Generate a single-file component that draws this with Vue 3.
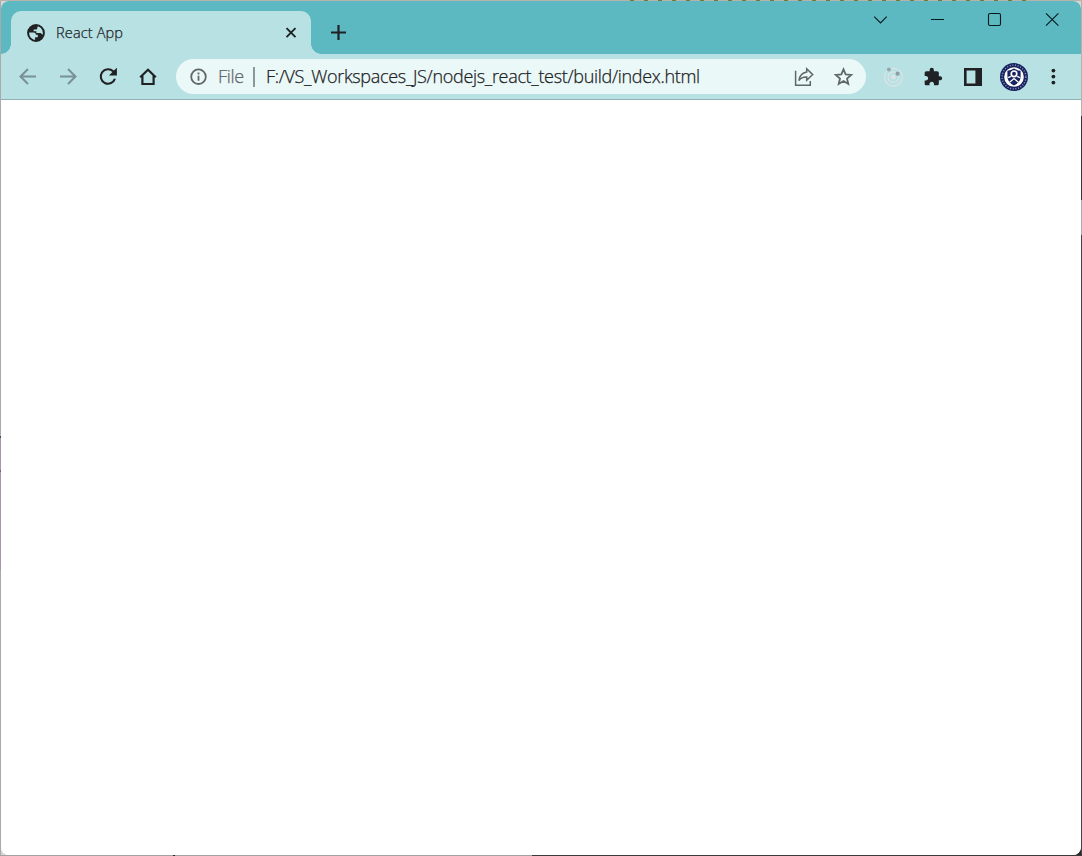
<script setup>
import { ref } from 'vue';

const tabTitle = ref('React App')
const scheme = ref('File')
const address = ref('F:/VS_Workspaces_JS/nodejs_react_test/build/index.html')
</script>

<template>
    <div class="desktop">
        <div class="window">
            <header class="title-bar">
                <div class="tab">
                    <svg class="favicon" viewBox="0 0 18 18">
                        <circle cx="9" cy="9" r="7.9" fill="#b8e1e4" stroke="#202124" stroke-width="2" />
                        <path d="M9.8 1.1C7 .5 3.5 2 2 5L1.2 8.5H6.5c1.5 0 2.3.8 2.3 2.3h2v2.4H8.1v3.5c4.2.7 7.5-1.8 8.6-5.5l-1.5-.7c-.5-1.1-1.2-1.6-2.5-1.6H9.4V7.3H6.7V5.6h2.2c1 0 1.4-.6 1.4-1.5V3l1.5-1.2z" fill="#202124" />
                    </svg>
                    <span class="tab-title">{{ tabTitle }}</span>
                    <svg class="tab-close" viewBox="0 0 12 12">
                        <path d="M1.5 1.2l9 9M10.5 1.2l-9 9" fill="none" stroke="#202124" stroke-width="1.9" />
                    </svg>
                </div>
                <svg class="new-tab" viewBox="0 0 16 16">
                    <path d="M8.5 1v15M1 8.5h15" fill="none" stroke="#202124" stroke-width="2.2" />
                </svg>
                <div class="caption-buttons">
                    <svg viewBox="0 0 16 16">
                        <path d="M1.2 4.7l6.3 6.3 6.3-6.3" />
                    </svg>
                    <svg viewBox="0 0 16 16">
                        <path d="M1 7.5h13" />
                    </svg>
                    <svg viewBox="0 0 16 16">
                        <rect x="1.5" y="1.5" width="12" height="12" rx="1.5" />
                    </svg>
                    <svg viewBox="0 0 16 16">
                        <path d="M2 1.3l12.4 12.4M14.4 1.3L2 13.7" />
                    </svg>
                </div>
            </header>

            <nav class="toolbar">
                <div class="nav-buttons">
                    <svg class="disabled" viewBox="0 0 24 24">
                        <path d="M20 11.5H5M12 4L4.5 11.5l7.5 7.5" />
                    </svg>
                    <svg class="disabled" viewBox="0 0 24 24">
                        <path d="M4 11.5h15M12 4l7.5 7.5-7.5 7.5" />
                    </svg>
                    <svg viewBox="0 0 24 24">
                        <path class="solid" d="M17.9 5.6A8.3 8.3 0 1 0 20 13.7h-2.2a6.2 6.2 0 1 1-1.4-6.6L13 10.5h7.9V2.7z" />
                    </svg>
                    <svg viewBox="0 0 24 24">
                        <path class="house" d="M4.2 12.3L12 4.8l7.8 7.5M6.4 10.8v8.2h11.2v-8.2" />
                    </svg>
                </div>

                <div class="address-bar">
                    <svg class="info" viewBox="0 0 18 18">
                        <circle cx="8.5" cy="8.7" r="7.3" />
                        <path d="M8.5 7.7v5M8.5 4.6v2" />
                    </svg>
                    <span class="scheme">{{ scheme }}</span>
                    <span class="divider"></span>
                    <span class="url">{{ address }}</span>
                    <svg class="share" viewBox="0 0 20 20">
                        <path d="M1.6 3.8v14.4h14.7v-4.3M12.7 1.8l6 5.8-6 5.7V10c-3.7-.1-6.1 1-7.8 3.6.6-4.4 3-7.7 7.8-8.5z" />
                    </svg>
                    <svg class="star" viewBox="0 0 20 20">
                        <path d="M9.5 2.3l2.15 5.1 5.55.5-4.2 3.65 1.25 5.4-4.75-2.9-4.75 2.9L6 11.55 1.8 7.9l5.55-.5z" />
                    </svg>
                </div>

                <svg class="orbit" viewBox="0 0 20 20">
                    <g fill="none" stroke="#dce3e4" stroke-width="1.2">
                        <circle cx="10.4" cy="10.2" r="8.9" />
                        <circle cx="10.4" cy="10.2" r="5.3" />
                    </g>
                    <circle cx="10.4" cy="10.2" r="2.4" fill="#dce3e4" />
                    <circle cx="5.9" cy="2.4" r="2" fill="#94a9ac" />
                    <circle cx="14.6" cy="6.7" r="2.1" fill="#8b9ea1" />
                </svg>
                <svg class="puzzle" viewBox="0 0 24 24">
                    <path d="M20.5 11H19V7c0-1.1-.9-2-2-2h-4V3.5C13 2.12 11.88 1 10.5 1S8 2.12 8 3.5V5H4c-1.1 0-1.99.9-1.99 2v3.8H3.5c1.49 0 2.7 1.21 2.7 2.7s-1.21 2.7-2.7 2.7H2V20c0 1.1.9 2 2 2h3.8v-1.5c0-1.49 1.21-2.7 2.7-2.7s2.7 1.21 2.7 2.7V22H17c1.1 0 2-.9 2-2v-4h1.5c1.38 0 2.5-1.12 2.5-2.5S21.88 11 20.5 11z" />
                </svg>
                <svg class="side-panel" viewBox="0 0 18 18">
                    <path fill-rule="evenodd" d="M0 0h18v18H0zM2.6 2.6v12.8h8.8V2.6z" />
                </svg>
                <svg class="avatar" viewBox="0 0 28 28">
                    <circle cx="14" cy="14" r="14" fill="#18235f" />
                    <circle cx="14" cy="14" r="11.9" fill="none" stroke="#8d98bd" stroke-width="1.5" stroke-dasharray="1 1.7" />
                    <circle cx="14" cy="14" r="9.8" fill="#fff" />
                    <path d="M7.4 7.7Q11 7.6 14 5.6q3 2 6.6 2.1v5.5q0 6.2-6.6 9.2-6.6-3-6.6-9.2z" fill="#18235f" />
                    <path d="M8.2 14.6l2.6-1.2M19.8 14.6l-2.6-1.2M9.6 19.2l4.4-3.6 4.4 3.6" fill="none" stroke="#fff" stroke-width="1.3" />
                    <circle cx="14" cy="10.8" r="2.8" fill="#18235f" stroke="#fff" stroke-width="1.7" />
                </svg>
                <svg class="menu" viewBox="0 0 4 16">
                    <circle cx="2.4" cy="1.6" r="1.9" />
                    <circle cx="2.4" cy="7.6" r="1.9" />
                    <circle cx="2.4" cy="13.6" r="1.9" />
                </svg>
            </nav>

            <main class="page"></main>
        </div>
    </div>
</template>

<style>
body {
    margin: 0;
    overflow: hidden;
}
</style>

<style scoped>
.desktop {
    box-sizing: border-box;
    width: 100vw;
    height: 100vh;
    padding: 1px;
    background:
        repeating-linear-gradient(90deg, #777a32 0 4px, #b8b3ab 4px 14px) 630px 0 / 405px 1px no-repeat,
        linear-gradient(#b8b3ab, #b8b3ab) 0 0 / 100% 1px no-repeat,
        linear-gradient(90deg, #a2a2a2 0 173px, #292929 173px 175px, #a2a2a2 175px 532px, #3a3a3a 532px) 0 100% / 100% 1px no-repeat,
        linear-gradient(#aaa 0 436px, #51445b 436px 438px, #a893b2 438px 470px, #75607e 470px 472px, #a893b2 472px 570px, #aaa 570px) 0 0 / 1px 100% no-repeat,
        linear-gradient(#b4b1aa 0 116px, #363636 116px 200px, #aaa 200px 235px, #444 235px) 100% 0 / 1px 100% no-repeat,
        linear-gradient(90deg, #d7d7d7 50%, #292929 50%) 0 100% / 100% 20px no-repeat,
        #d9d7d4;
}

.window {
    display: flex;
    flex-direction: column;
    height: 100%;
    border-radius: 8px;
    overflow: hidden;
    background: #fff;
    font-family: "Open Sans", "Noto Sans", sans-serif;
    font-weight: 300;
    color: #202124;
    -webkit-text-stroke: .25px currentColor;
}

svg {
    display: block;
    flex: none;
    overflow: visible;
}

.title-bar {
    display: flex;
    align-items: flex-start;
    box-sizing: border-box;
    height: 53px;
    padding-left: 10px;
    background: #5cb8c1;
}

.tab {
    position: relative;
    display: flex;
    align-items: center;
    box-sizing: border-box;
    width: 300px;
    height: 43px;
    margin-top: 10px;
    padding: 0 14px 0 16px;
    border-radius: 10px 10px 0 0;
    background: #b8e1e4;
}

/* flared feet where the tab joins the toolbar */
.tab::before,
.tab::after {
    content: "";
    position: absolute;
    bottom: 0;
    width: 10px;
    height: 10px;
}

.tab::before {
    left: -10px;
    background: radial-gradient(circle at 0 0, transparent 9.5px, #b8e1e4 10px);
}

.tab::after {
    right: -10px;
    background: radial-gradient(circle at 100% 0, transparent 9.5px, #b8e1e4 10px);
}

.favicon {
    width: 18px;
    height: 18px;
}

.tab-title {
    flex: 1;
    padding-left: 11px;
    font-size: 14.5px;
    letter-spacing: .15px;
    white-space: nowrap;
}

.tab-close {
    width: 12px;
    height: 12px;
}

.new-tab {
    width: 16px;
    height: 16px;
    margin: 23px 0 0 19px;
}

.caption-buttons {
    display: flex;
    gap: 41px;
    margin: 11px 21px 0 auto;
}

.caption-buttons svg {
    width: 16px;
    height: 16px;
    fill: none;
    stroke: #08191b;
    stroke-width: 1.1;
}

.toolbar {
    display: flex;
    align-items: center;
    box-sizing: border-box;
    height: 46px;
    padding: 0 26px 0 15.4px;
    border-bottom: 1px solid #91b0b3;
    background: #b8e1e4;
}

.nav-buttons {
    display: flex;
    gap: 16px;
}

.nav-buttons svg {
    width: 24px;
    height: 24px;
    fill: none;
    stroke: #202124;
    stroke-width: 2;
}

.nav-buttons .disabled {
    stroke: #789194;
}

.nav-buttons .solid {
    fill: #202124;
    stroke: none;
}

.nav-buttons .house {
    stroke-width: 2.2;
}

.address-bar {
    display: flex;
    align-items: center;
    box-sizing: border-box;
    width: 690px;
    height: 35px;
    margin-left: 15.6px;
    padding: 0 12px 0 14px;
    border-radius: 18px;
    background: #ebf8f8;
    font-size: 18px;
    letter-spacing: -.31px;
    white-space: nowrap;
}

.info {
    width: 18px;
    height: 18px;
    fill: none;
    stroke: #5f6769;
    stroke-width: 1.8;
}

.scheme {
    width: 35px;
    padding: 0 0 2px 10px;
    color: #5f6769;
}

.divider {
    width: 2px;
    height: 20px;
    margin-right: 11px;
    background: #8b9899;
}

.url {
    flex: 1;
    padding-bottom: 2px;
}

.share,
.star {
    width: 20px;
    height: 20px;
    fill: none;
    stroke: #5f6769;
    stroke-width: 1.5;
}

.star {
    margin-left: 20px;
    stroke-width: 1.8;
}

.orbit {
    width: 20px;
    height: 20px;
    margin-left: 17px;
}

.puzzle {
    width: 20px;
    height: 20px;
    margin-left: 20.5px;
    fill: #202124;
}

.side-panel {
    width: 18px;
    height: 18px;
    margin-left: 21px;
    fill: #202124;
}

.avatar {
    width: 28px;
    height: 28px;
    margin-left: 17.5px;
}

.menu {
    width: 4px;
    height: 16px;
    margin-left: auto;
    fill: #202124;
}

.page {
    flex: 1;
    background: #fff;
}
</style>
